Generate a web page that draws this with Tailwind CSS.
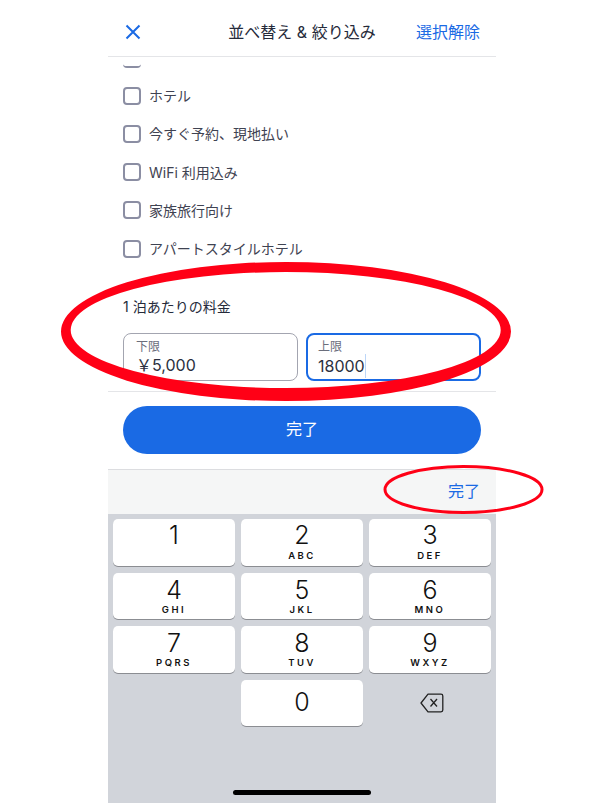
<!DOCTYPE html>
<html lang="ja">
<head>
<meta charset="utf-8">
<script src="https://cdn.jsdelivr.net/npm/@tailwindcss/browser@4"></script>
</head>
<body class="bg-white">
<div class="relative w-[604px] h-[804px] overflow-hidden bg-white font-['Inter','Noto_Sans_CJK_JP',sans-serif]">
  <div class="mx-auto w-[388px] h-[803px] flex flex-col">
    <header class="h-[57px] shrink-0 pt-[8px] border-b border-[#e4e5e8] flex items-start">
      <div class="h-[48px] w-full pl-[17px] pr-[16px] flex items-center justify-between">
        <svg width="16" height="16" viewBox="0 0 16 16" fill="none" stroke="#1a6ae4" stroke-width="2"><path d="M1.500 1.500 14.500 14.500M14.500 1.500 1.500 14.500"/></svg>
        <span class="text-[16px] text-[#252a3a] ml-[47px]">並べ替え &amp; 絞り込み</span>
        <span class="text-[16px] text-[#1a6ae4]">選択解除</span>
      </div>
    </header>
    <div class="h-[335px] shrink-0 overflow-hidden border-b border-[#e4e5e8] px-[15px]">
      <div class="mt-[-18.500px] flex flex-col text-[14px] text-[#3f4352]">
        <div class="h-[38.200px] flex items-start pt-[25px]"><span class="w-[18px] h-[4px] rounded-b-[4px] border-b-2 border-[#8b8ea3]"></span></div>
        <div class="h-[38.200px] flex items-center gap-[8px]"><span class="size-[18px] rounded-[4px] border-2 border-[#8b8ea3]"></span><span>ホテル</span></div>
        <div class="h-[38.200px] flex items-center gap-[8px]"><span class="size-[18px] rounded-[4px] border-2 border-[#8b8ea3]"></span><span>今すぐ予約、現地払い</span></div>
        <div class="h-[38.200px] flex items-center gap-[8px]"><span class="size-[18px] rounded-[4px] border-2 border-[#8b8ea3]"></span><span>WiFi 利用込み</span></div>
        <div class="h-[38.200px] flex items-center gap-[8px]"><span class="size-[18px] rounded-[4px] border-2 border-[#8b8ea3]"></span><span>家族旅行向け</span></div>
        <div class="h-[38.200px] flex items-center gap-[8px]"><span class="size-[18px] rounded-[4px] border-2 border-[#8b8ea3]"></span><span>アパートスタイルホテル</span></div>
      </div>
      <h2 class="mt-[29.500px] text-[14px] leading-[20px] text-[#252a3a]">1 泊あたりの料金</h2>
      <div class="mt-[16px] flex gap-[8px]">
        <div class="w-[175px] h-[48px] rounded-[8px] border border-[#a3a5b0] pl-[12px] pt-[6px]">
          <div class="text-[12px] leading-[14px] text-[#6b6e7c]">下限</div>
          <div class="text-[16px] leading-[22px] text-[#2b3040]">￥5,000</div>
        </div>
        <div class="w-[175px] h-[48px] rounded-[8px] border-2 border-[#1a6ae4] pl-[10px] pt-[5px]">
          <div class="text-[12px] leading-[14px] text-[#6b6e7c]">上限</div>
          <div class="flex items-center text-[16px] leading-[22px] text-[#2b3040]">18000<span class="w-px h-[24px] bg-[#bcd6f8]"></span></div>
        </div>
      </div>
    </div>
    <div class="h-[77px] shrink-0 px-[15px] pt-[14px]">
      <div class="h-[48px] pb-[2px] rounded-full bg-[#1a6ae4] flex items-center justify-center text-[16px] text-white">完了</div>
    </div>
    <div class="h-[45px] pb-[2px] shrink-0 bg-[#f5f6f6] border-t border-[#dcdde0] flex items-center justify-end pr-[16px] text-[16px] text-[#1a6ae4]">完了</div>
    <div class="flex-1 relative bg-[#d1d4da] px-[5px] pt-[5px]">
      <div class="grid grid-cols-3 gap-x-[6px] gap-y-[7px] auto-rows-[46.500px] text-[#111]">
        <div class="rounded-[5px] bg-white shadow-[0_1px_0_#8b8d92] flex flex-col items-center text-[25px] leading-[32px] font-[350]">1</div>
        <div class="rounded-[5px] bg-white shadow-[0_1px_0_#8b8d92] flex flex-col items-center text-[25px] leading-[32px] font-[350]">2<span class="text-[9.500px] leading-[9px] font-semibold tracking-[2.500px]">ABC</span></div>
        <div class="rounded-[5px] bg-white shadow-[0_1px_0_#8b8d92] flex flex-col items-center text-[25px] leading-[32px] font-[350]">3<span class="text-[9.500px] leading-[9px] font-semibold tracking-[2.500px]">DEF</span></div>
        <div class="rounded-[5px] bg-white shadow-[0_1px_0_#8b8d92] flex flex-col items-center text-[25px] leading-[32px] font-[350] pt-[1px]">4<span class="text-[9.500px] leading-[8px] font-semibold tracking-[2.500px]">GHI</span></div>
        <div class="rounded-[5px] bg-white shadow-[0_1px_0_#8b8d92] flex flex-col items-center text-[25px] leading-[32px] font-[350] pt-[1px]">5<span class="text-[9.500px] leading-[8px] font-semibold tracking-[2.500px]">JKL</span></div>
        <div class="rounded-[5px] bg-white shadow-[0_1px_0_#8b8d92] flex flex-col items-center text-[25px] leading-[32px] font-[350] pt-[1px]">6<span class="text-[9.500px] leading-[8px] font-semibold tracking-[2.500px]">MNO</span></div>
        <div class="rounded-[5px] bg-white shadow-[0_1px_0_#8b8d92] flex flex-col items-center text-[25px] leading-[32px] font-[350] pt-[1px]">7<span class="text-[9.500px] leading-[8px] font-semibold tracking-[2.500px]">PQRS</span></div>
        <div class="rounded-[5px] bg-white shadow-[0_1px_0_#8b8d92] flex flex-col items-center text-[25px] leading-[32px] font-[350] pt-[1px]">8<span class="text-[9.500px] leading-[8px] font-semibold tracking-[2.500px]">TUV</span></div>
        <div class="rounded-[5px] bg-white shadow-[0_1px_0_#8b8d92] flex flex-col items-center text-[25px] leading-[32px] font-[350] pt-[1px]">9<span class="text-[9.500px] leading-[8px] font-semibold tracking-[2.500px]">WXYZ</span></div>
        <div></div>
        <div class="rounded-[5px] bg-white shadow-[0_1px_0_#8b8d92] flex items-center justify-center text-[25px] font-[350]">0</div>
        <div class="flex items-center justify-center pt-[1px] pl-[4px]">
          <svg width="24" height="20" viewBox="0 0 24 20" fill="none" stroke="#222" stroke-width="1.300" stroke-linejoin="round"><path d="M8 1.200H21a1.800 1.800 0 0 1 1.800 1.800V17a1.800 1.800 0 0 1-1.800 1.800H8L1 10Z"/><path d="M10.500 6 17 13.500M17 6l-6.500 7.500"/></svg>
        </div>
      </div>
      <div class="absolute left-[125px] bottom-[8px] w-[138px] h-[5px] rounded-full bg-black"></div>
    </div>
  </div>
  <svg class="absolute inset-0 pointer-events-none" width="604" height="804" viewBox="0 0 604 804">
    <path fill="#ff0016" fill-rule="evenodd" d="M61 331.500a225 69.500 0 1 0 450 0a225 69.500 0 1 0-450 0ZM70.700 330a215 58 0 1 1 430 0a215 58 0 1 1-430 0Z"/>
    <ellipse cx="463.500" cy="489.500" rx="78.500" ry="23" fill="none" stroke="#ff0016" stroke-width="3"/>
  </svg>
</div>
</body>
</html>
